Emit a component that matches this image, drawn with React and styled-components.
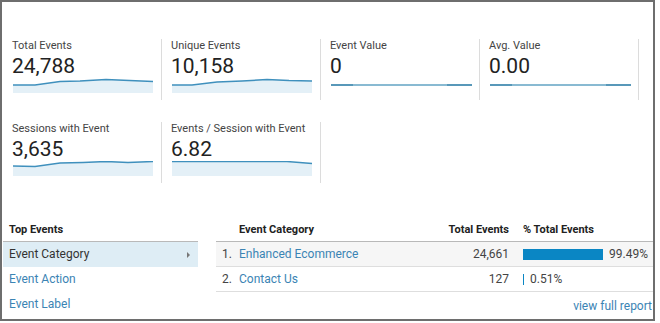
import React from "react";
import styled, { createGlobalStyle } from "styled-components";

const GlobalStyle = createGlobalStyle`
  body {
    margin: 0;
    background: #fff;
    font-family: Roboto, "Liberation Sans", Arial, sans-serif;
  }
`;

const metrics = [
  { label: "Total Events", value: "24,788", line: [[0, 7], [22, 7], [47, 3.5], [67, 3], [93, 1.5], [140, 3.5]] },
  { label: "Unique Events", value: "10,158", line: [[0, 7], [20, 7], [45, 4], [70, 3], [95, 1.5], [117, 2.5], [140, 3]] },
  { label: "Event Value", value: "0", flat: true },
  { label: "Avg. Value", value: "0.00", flat: true },
  { label: "Sessions with Event", value: "3,635", line: [[0, 5], [22, 5.5], [47, 2], [70, 1.5], [93, 0.5], [115, 1.5], [140, 0.5]] },
  { label: "Events / Session with Event", value: "6.82", line: [[0, 0.5], [60, 0.5], [115, 0.5], [140, 2.5]] },
];

const rows = [
  { name: "Enhanced Ecommerce", total: "24,661", pct: 99.49 },
  { name: "Contact Us", total: "127", pct: 0.51 },
];

const SPARK_W = 141;
const SPARK_H = 15;

const Sparkline = ({ points, flat }) => {
  if (flat) {
    return (
      <Spark width={SPARK_W} height={SPARK_H}>
        <line x1="0" y1="7" x2="22" y2="7" stroke="#2f7fa8" strokeWidth="1.6" />
        <line x1="22" y1="7" x2="116" y2="7" stroke="#62a3c3" strokeWidth="1.4" />
        <line x1="116" y1="7" x2="141" y2="7" stroke="#2f7fa8" strokeWidth="1.6" />
      </Spark>
    );
  }
  const line = points.map(([x, y]) => `${x},${y}`).join(" ");
  const area = `M0,${SPARK_H} L${points.map(([x, y]) => `${x},${y}`).join(" L")} L140,${SPARK_H} Z`;
  return (
    <Spark width={SPARK_W} height={SPARK_H}>
      <path d={area} fill="#e4f0f7" />
      <polyline points={line} fill="none" stroke="#3f90bd" strokeWidth="1.5" />
    </Spark>
  );
};

const App = () => {
  return (
    <>
      <GlobalStyle />
      <Frame>
        <MetricGrid>
          {metrics.map((m) => (
            <Metric key={m.label}>
              <Label>{m.label}</Label>
              <Value>{m.value}</Value>
              <Sparkline points={m.line} flat={m.flat} />
            </Metric>
          ))}
        </MetricGrid>

        <Bottom>
          <TopList>
            <ListHead>Top Events</ListHead>
            <ListItem $active>
              Event Category
              <Caret />
            </ListItem>
            <ListItem>Event Action</ListItem>
            <ListItem>Event Label</ListItem>
          </TopList>

          <Report>
            <TableRow $head>
              <Cell />
              <Cell>Event Category</Cell>
              <Cell $right>Total Events</Cell>
              <Cell $pct>% Total Events</Cell>
            </TableRow>
            {rows.map((r, i) => (
              <TableRow key={r.name} $shaded={i === 0}>
                <Cell $index>{i + 1}.</Cell>
                <Cell $link>{r.name}</Cell>
                <Cell $right>{r.total}</Cell>
                <Cell $pct>
                  <Bar style={{ width: Math.max(1, Math.round(r.pct * 0.804)) }} />
                  {r.pct.toFixed(2)}%
                </Cell>
              </TableRow>
            ))}
            <FullReport>view full report</FullReport>
          </Report>
        </Bottom>
      </Frame>
    </>
  );
};

export default App;

const Frame = styled.div`
  box-sizing: border-box;
  width: 655px;
  height: 321px;
  border: 2px solid #6e6e6e;
  padding-top: 37px;
  overflow: hidden;
`;

const MetricGrid = styled.div`
  display: grid;
  grid-template-columns: repeat(4, 159px);
  row-gap: 22px;
  padding-left: 1px;
`;

const Metric = styled.div`
  box-sizing: border-box;
  height: 61px;
  padding: 0 8px 0 9px;
  border-right: 1px solid #dcdcdc;
`;

const Label = styled.div`
  font-size: 11px;
  line-height: 13px;
  color: #444;
  white-space: nowrap;
`;

const Value = styled.div`
  margin-top: 3px;
  font-size: 21px;
  line-height: 23px;
  color: #222;
`;

const Spark = styled.svg`
  display: block;
  margin-left: 1px;
`;

const Bottom = styled.div`
  display: flex;
  margin-top: 39px;
  gap: 18px;
`;

const TopList = styled.div`
  width: 195px;
  margin-left: 1px;
`;

const ListHead = styled.div`
  box-sizing: border-box;
  height: 20px;
  padding: 0 0 5px 6px;
  display: flex;
  align-items: flex-end;
  border-bottom: 1px solid #b9b9b9;
  font-size: 11px;
  font-weight: 700;
  color: #222;
`;

const ListItem = styled.div`
  position: relative;
  height: 25px;
  line-height: 25px;
  padding-left: 6px;
  font-size: 12px;
  color: ${(p) => (p.$active ? "#333" : "#3b84b4")};
  background: ${(p) => (p.$active ? "#deedf5" : "transparent")};
`;

const Caret = styled.span`
  position: absolute;
  right: 8px;
  top: 10px;
  width: 0;
  height: 0;
  border-top: 3px solid transparent;
  border-bottom: 3px solid transparent;
  border-left: 3px solid #777;
`;

const Report = styled.div`
  flex: 1;
`;

const TableRow = styled.div`
  box-sizing: border-box;
  display: grid;
  grid-template-columns: 23px 200px 70px 1fr;
  height: ${(p) => (p.$head ? "20px" : "25px")};
  align-items: ${(p) => (p.$head ? "end" : "center")};
  padding-bottom: ${(p) => (p.$head ? "5px" : "0")};
  border-bottom: 1px solid ${(p) => (p.$head ? "#b9b9b9" : "#dedede")};
  background: ${(p) => (p.$shaded ? "#f6f6f6" : "transparent")};
  font-size: ${(p) => (p.$head ? "11px" : "12px")};
  font-weight: ${(p) => (p.$head ? 700 : 400)};
  color: ${(p) => (p.$head ? "#222" : "#444")};
`;

const Cell = styled.div`
  display: flex;
  align-items: center;
  white-space: nowrap;
  justify-content: ${(p) => (p.$right ? "flex-end" : "flex-start")};
  padding-left: ${(p) => (p.$index ? "6px" : p.$pct ? "14px" : "0")};
  color: ${(p) => (p.$link ? "#3b84b4" : "inherit")};
`;

const Bar = styled.span`
  display: inline-block;
  height: 11px;
  margin-right: 6px;
  background: #0a86c4;
`;

const FullReport = styled.div`
  margin-top: 7px;
  padding-right: 1px;
  text-align: right;
  font-size: 12px;
  color: #3b84b4;
`;
